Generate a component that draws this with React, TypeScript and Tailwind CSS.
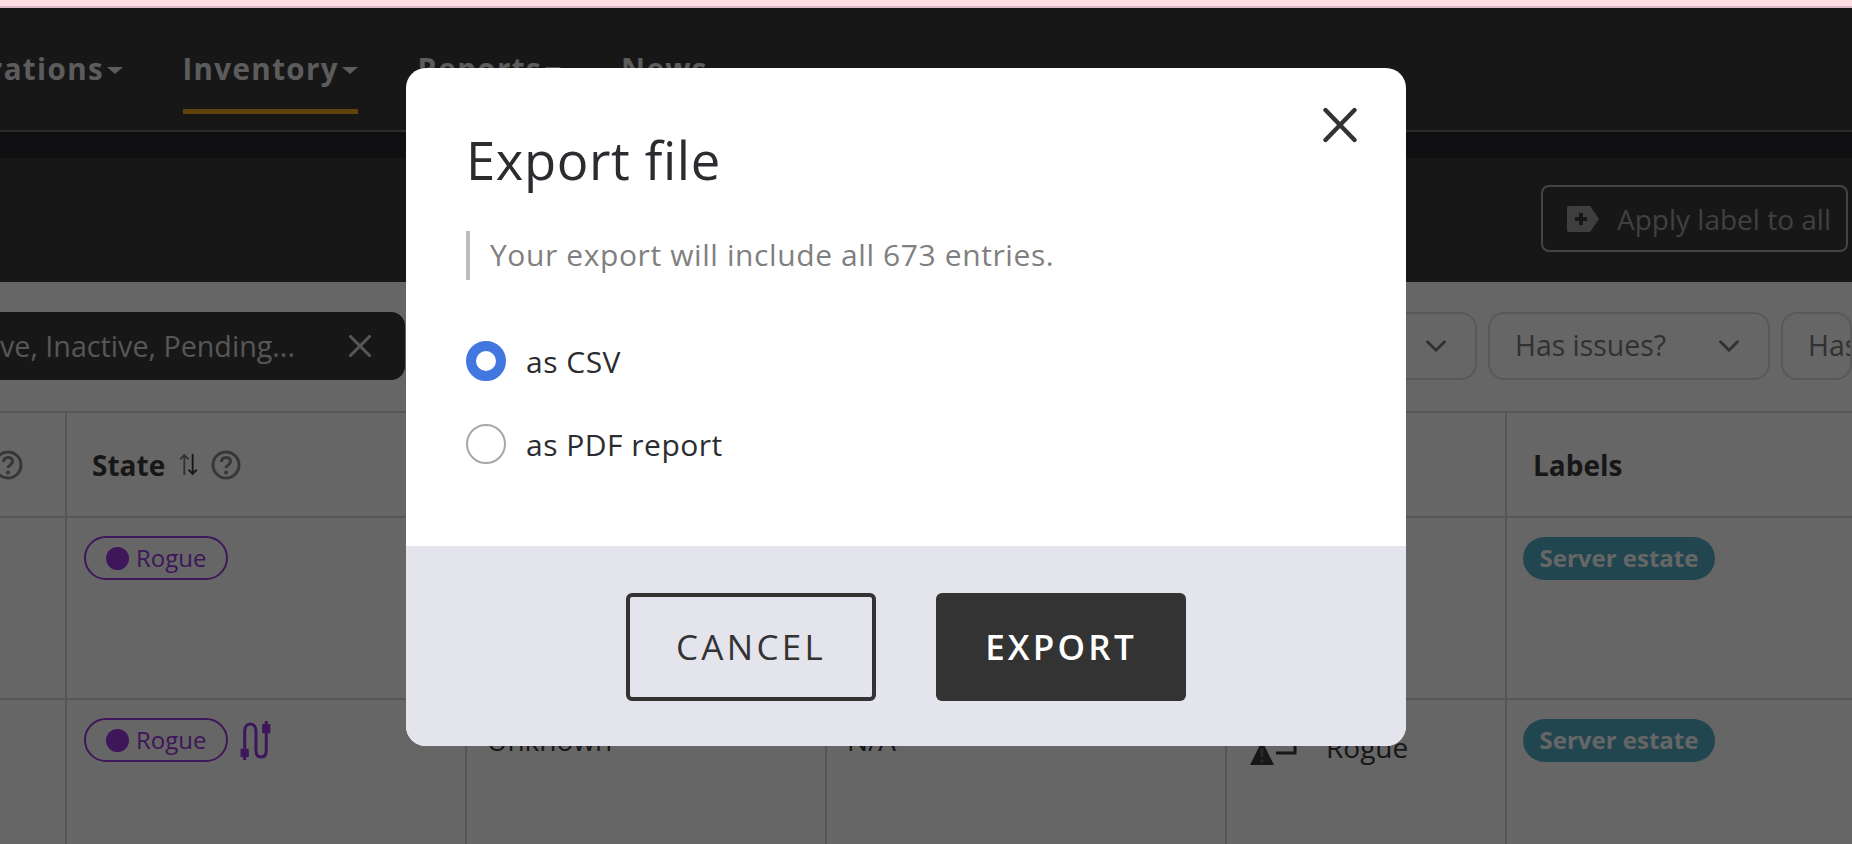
import { ChevronDown, X } from "lucide-react";

const COLUMNS = ["w-[67px]", "w-[400px]", "w-[360px]", "w-[400px]", "w-[280px]", "flex-1"];

function NavItem({ label, active, caret, className }: { label: string; active?: boolean; caret?: boolean; className?: string }) {
  return (
    <div className={`flex flex-col h-[124px] pt-[39px] ${className ?? ""}`}>
      <div className="flex items-center justify-end h-[44px] text-[29.5px] font-bold tracking-[1.4px] text-[#e6e6e6] whitespace-nowrap">
        {label}
        {caret && <span className="ml-[3px] mt-[3px] w-0 h-0 border-x-[8px] border-x-transparent border-t-[7px] border-t-[#e6e6e6]" />}
      </div>
      {active && <div className="mt-auto mb-[18px] h-[5px] bg-[#f0a621]" />}
    </div>
  );
}

function Help({ className }: { className?: string }) {
  return (
    <svg viewBox="0 0 30 30" className={`w-[30px] h-[30px] ${className ?? ""}`} fill="none">
      <circle cx="15" cy="15" r="13" stroke="#8a8a8a" strokeWidth="3" />
      <path d="M10.5 12c0-3 2-4.6 4.6-4.6s4.5 1.6 4.5 4c0 3.6-4.6 3.4-4.6 6.6" stroke="#8a8a8a" strokeWidth="3" />
      <circle cx="15" cy="22.5" r="2" fill="#8a8a8a" />
    </svg>
  );
}

function SortArrows({ className }: { className?: string }) {
  return (
    <svg viewBox="0 0 20 24" className={`w-[21px] h-[25px] ${className ?? ""}`} fill="none" stroke="#7a7a7a" strokeWidth="1.8">
      <path d="M6 22V3M2 7l4-4 4 4" />
      <path d="M14 2v19M10 17l4 4 4-4" stroke="#3a3a3a" />
    </svg>
  );
}

function RogueChip() {
  return (
    <div className="flex items-center w-[144px] h-[44px] rounded-full border-2 border-[#9c38e0] pl-[20px] text-[24px] text-[#9c38e0]">
      <span className="w-[23px] h-[23px] rounded-full bg-[#9c38e0] mr-[7px] shrink-0" />
      Rogue
    </div>
  );
}

function LabelPill() {
  return (
    <div className="flex items-center justify-center w-[192px] h-[43px] pb-[2px] rounded-full bg-[#55b0c8] text-[24px] font-bold text-white">
      Server estate
    </div>
  );
}

function CableIcon() {
  return (
    <svg viewBox="0 0 34 38" className="w-[36px] h-[39px] mt-[3px]" fill="none" stroke="#9c38e0" strokeWidth="3">
      <path d="M5 27V10c0-4 2-7 5.5-7S16 6 16 10v19c0 4 2 6 5 6s5-2 5-6V11" />
      <path d="M1 27h8v8H6.5v3h-3v-3H1z" fill="#9c38e0" stroke="none" />
      <path d="M22 3h2.5V0h3v3H30v9h-8z" fill="#9c38e0" stroke="none" />
    </svg>
  );
}

function WarnCorner() {
  return (
    <svg viewBox="0 0 50 30" className="w-[50px] h-[30px] mt-[35px]" fill="none">
      <path d="M12 6l12 24H0z" fill="#3a3a3a" />
      <path d="M12 13v9" stroke="#666" strokeWidth="3" />
      <circle cx="12" cy="26" r="1.8" fill="#666" />
      <path d="M26 18h19V4" stroke="#3a3a3a" strokeWidth="3" />
    </svg>
  );
}

function TagPlus() {
  return (
    <svg viewBox="0 0 32 26" className="w-[32px] h-[26px]">
      <path d="M2 0h21l9 13-9 13H2a2 2 0 0 1-2-2V2a2 2 0 0 1 2-2z" fill="#9e9e9e" />
      <path d="M14 7v12M8 13h12" stroke="#3a3a3a" strokeWidth="4" />
    </svg>
  );
}

function Dropdown({ label, chevron, className }: { label: string; chevron?: boolean; className: string }) {
  return (
    <div className={`flex items-center shrink-0 h-[68px] rounded-[16px] border-2 border-[#dcdcdc] pl-[25px] pr-[22px] text-[28.4px] text-[#7a7a7a] whitespace-nowrap overflow-hidden ${className}`}>
      {label}
      {chevron && <ChevronDown className="ml-auto w-[34px] h-[34px] text-[#7a7a7a]" strokeWidth={2} />}
    </div>
  );
}

function Row({ cells, className }: { cells: React.ReactNode[]; className: string }) {
  return (
    <div className={`flex border-b-2 border-[#d8d8d8] ${className}`}>
      {cells.map((c, i) => (
        <div key={i} className={`${COLUMNS[i]} shrink-0 border-r-2 border-[#d8d8d8] last:border-r-0 h-full overflow-hidden`}>
          {c}
        </div>
      ))}
    </div>
  );
}

export default function App() {
  return (
    <div className="relative w-[1852px] h-[844px] overflow-hidden bg-white font-['Open_Sans',sans-serif] text-[#3a3a3a]">
      {/* page behind the dialog */}
      <div className="h-[8px]" />
      <nav className="relative h-[124px] bg-[#3a3a3a] border-b-2 border-[#6c6c6c] flex">
        <NavItem label="Operations" caret className="ml-[-67px] w-[190px]" />
        <NavItem label="Inventory" active caret className="ml-[60px] w-[175px]" />
        <NavItem label="Reports" caret className="ml-[60px] w-[143px]" />
        <NavItem label="News" className="ml-[60px]" />
      </nav>
      <div className="h-[26px] bg-[#282a2d]" />
      <section className="h-[124px] bg-[#3a3a3a] flex justify-end pr-[4px] pt-[27px]">
        <div className="flex items-center w-[307px] h-[67px] rounded-[8px] border-2 border-[#aaa] pl-[24px] text-[28px] text-[#a0a0a0]">
          <TagPlus />
          <span className="ml-[18px] whitespace-nowrap">Apply label to all</span>
        </div>
      </section>
      <div className="flex items-center h-[129px] pb-[2px]">
        <div className="flex items-center justify-between w-[405px] h-[68px] shrink-0 rounded-r-[14px] bg-[#3a3a3a] text-[28.7px] text-[#d8d8d8] pr-[26px] overflow-hidden whitespace-nowrap">
          <span>ve, Inactive, Pending...</span>
          <X className="w-[38px] h-[38px] text-[#d8d8d8]" strokeWidth={2} />
        </div>
        <div className="flex-1" />
        <Dropdown label="" chevron className="w-[120px] mr-[11px]" />
        <Dropdown label="Has issues?" chevron className="w-[282px] mr-[11px]" />
        <Dropdown label="Has" className="w-[71px]" />
      </div>
      <div className="border-t-2 border-[#d8d8d8]">
        <Row
          className="h-[105px]"
          cells={[
            <div className="flex items-center h-full"><Help className="ml-[-7px]" /></div>,
            <div className="flex items-center h-full pl-[25px] text-[28px] font-bold">
              State
              <SortArrows className="ml-[13px]" />
              <Help className="ml-[12px]" />
            </div>,
            <div />,
            <div />,
            <div />,
            <div className="flex items-center h-full pl-[26px] text-[28px] font-bold">Labels</div>,
          ]}
        />
        <Row
          className="h-[182px]"
          cells={[
            <div />,
            <div className="pl-[17px] pt-[18px]"><RogueChip /></div>,
            <div />,
            <div />,
            <div />,
            <div className="pl-[16px] pt-[19px]"><LabelPill /></div>,
          ]}
        />
        <Row
          className="h-[200px]"
          cells={[
            <div />,
            <div className="flex items-start pl-[17px] pt-[18px] gap-[11px]"><RogueChip /><CableIcon /></div>,
            <div className="pl-[20px] pt-[19px] text-[28px]">Unknown</div>,
            <div className="pl-[20px] pt-[19px] text-[28px]">N/A</div>,
            <div className="flex items-start pl-[23px] gap-[26px] text-[28px]">
              <WarnCorner />
              <span className="mt-[26px]">Rogue</span>
            </div>,
            <div className="pl-[16px] pt-[19px]"><LabelPill /></div>,
          ]}
        />
      </div>

      {/* dim layer, with the notice bar left above it */}
      <div className="absolute inset-0 bg-black/60" />
      <div className="absolute inset-x-0 top-0 h-[8px] bg-[#fddfe4] border-b-2 border-[#dcbcc6]" />

      <div className="absolute left-[406px] top-[68px] w-[1000px] h-[678px] rounded-[20px] overflow-hidden bg-white flex flex-col">
        <div className="relative flex-1 pl-[60px] pt-[58px]">
          <button className="absolute right-[49px] top-[39px] w-[34px] h-[36px]">
            <svg viewBox="0 0 34 36" className="w-[34px] h-[36px]" fill="none" stroke="#333" strokeWidth="4.4" strokeLinecap="round">
              <path d="M2.5 3l29 30M31.5 3l-29 30" />
            </svg>
          </button>
          <h2 className="text-[52.6px] leading-[68px] text-[#2a2c30] tracking-[0.6px]">Export file</h2>
          <div className="mt-[37px] h-[49px] pb-[2px] flex items-center border-l-[4px] border-[#bdbdbd] pl-[20px] text-[30px] tracking-[0.6px] text-[#808080]">
            Your export will include all 673 entries.
          </div>
          <div className="mt-[61px] flex items-center h-[40px]">
            <span className="w-[40px] h-[40px] rounded-full border-[10px] border-[#4276e0] bg-white shrink-0" />
            <span className="ml-[20px] text-[30px] tracking-[0.5px] text-[#2a2c30]">as CSV</span>
          </div>
          <div className="mt-[43px] flex items-center h-[40px]">
            <span className="w-[40px] h-[40px] rounded-full border-2 border-[#a8a8a8] bg-white shrink-0" />
            <span className="ml-[20px] text-[30px] tracking-[0.5px] text-[#2a2c30]">as PDF report</span>
          </div>
        </div>
        <div className="h-[200px] bg-[#e4e4ec] flex items-start justify-center pt-[47px] gap-[60px]">
          <button className="w-[250px] h-[108px] rounded-[6px] border-[4px] border-[#333] text-[35px] font-medium tracking-[3.3px] text-[#333]">CANCEL</button>
          <button className="w-[250px] h-[108px] rounded-[6px] bg-[#333] text-[35px] font-semibold tracking-[3.2px] text-white">EXPORT</button>
        </div>
      </div>
    </div>
  );
}
